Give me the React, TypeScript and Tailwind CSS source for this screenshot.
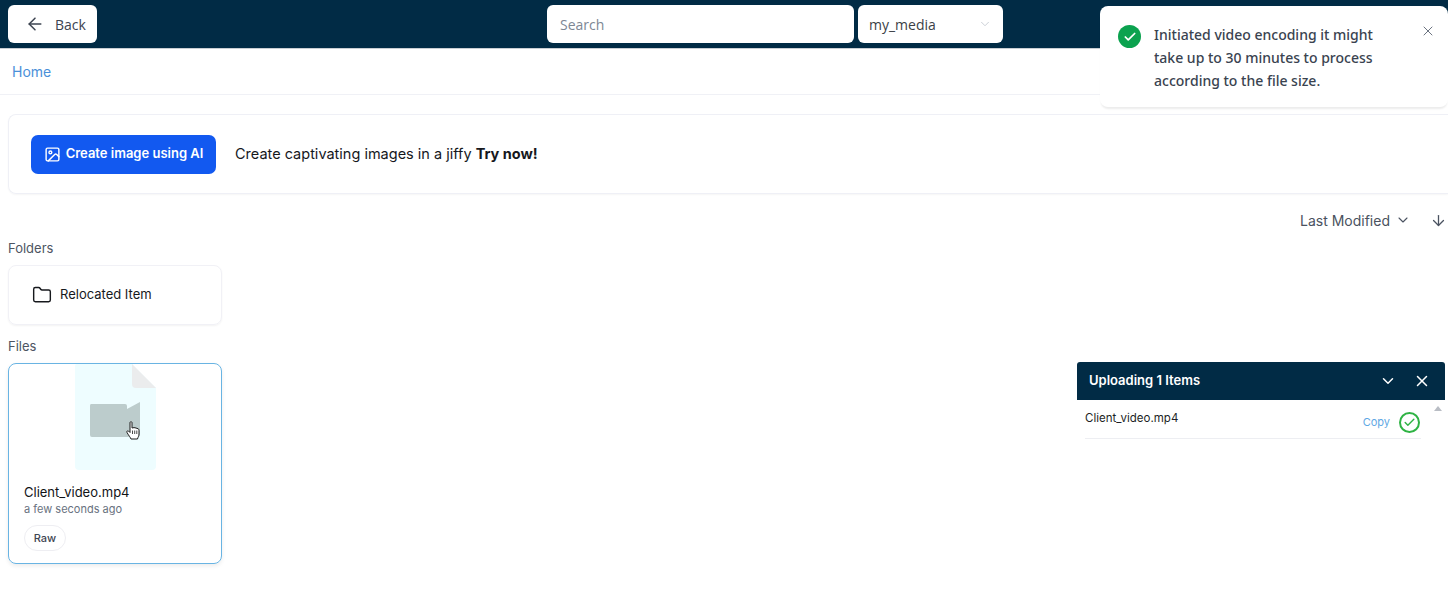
// 미디어 라이브러리 화면 — 헤더, 배너, 폴더/파일 카드, 토스트, 업로드 패널.
import { ArrowDown, ArrowLeft, Check, ChevronDown, Folder, Image, X } from 'lucide-react'

const INTER = { fontFamily: 'Inter, sans-serif' }

function Header() {
  return (
    <header className="relative flex h-[48px] items-start bg-[#012b45] pt-[5px] pl-[8px] shadow-[0_1px_0_#c9ced3]">
      <button className="flex h-[38px] w-[89px] items-center rounded-[6px] bg-white pl-[17px] text-[14px] text-[#3d4451] font-['Open_Sans',sans-serif]">
        <ArrowLeft className="h-[20px] w-[20px] mr-[10px]" strokeWidth={1.8} />
        Back
      </button>
      <div className="ml-[450px] flex h-[38px] w-[307px] items-center rounded-[6px] bg-white pl-[13px] text-[14px] text-[#7d8794] font-['Open_Sans',sans-serif]">
        Search
      </div>
      <div className="ml-[4px] flex h-[38px] w-[145px] items-center justify-between rounded-[6px] bg-white pl-[11px] pr-[11px] text-[14px] text-[#3b3f46] font-['Open_Sans',sans-serif]">
        my_media
        <ChevronDown className="h-[14px] w-[14px] text-[#c4c9d0]" strokeWidth={1.5} />
      </div>
    </header>
  )
}

function Banner() {
  return (
    <div className="ml-[8px] mt-[19px] flex h-[80px] items-center rounded-l-[8px] border border-r-0 border-[#eff0f6] pl-[22px] shadow-[0_1px_2px_rgba(0,0,0,0.04)]">
      <button className="flex h-[39px] w-[185px] items-center justify-center gap-[5px] rounded-[7px] bg-[#1259f0] text-[13px] font-semibold text-white">
        <Image className="h-[17px] w-[17px]" strokeWidth={2} />
        Create image using AI
      </button>
      <p className="ml-[19px] text-[14.5px] text-[#16181d]">
        Create captivating images in a jiffy <span className="font-bold">Try now!</span>
      </p>
    </div>
  )
}

function FolderCard() {
  return (
    <div className="ml-[8px] mt-[9px] flex h-[60px] w-[214px] items-center rounded-[8px] border border-[#f1f1f6] pl-[23px] shadow-[0_1px_2px_rgba(0,0,0,0.05)]">
      <Folder className="h-[20px] w-[20px] text-[#17191d]" strokeWidth={1.7} />
      <span className="ml-[8px] text-[13px] text-[#17191d]">Relocated Item</span>
    </div>
  )
}

function FileGlyph() {
  return (
    <svg width="81" height="106" viewBox="0 0 81 106" className="block">
      <path d="M2 0H57L81 24V102Q81 106 77 106H4Q0 106 0 102V2Q0 0 2 0Z" fill="#eefdff" />
      <path d="M57 0L81 24L61 24Q57 24 57 20Z" fill="#ebeced" />
      <path d="M16 40Q15 40 15 42V71Q15 73 17 73H63Q65 73 65 71V38L52 45V42Q52 40 50 40Z" fill="#bccccc" />
    </svg>
  )
}

function FileCard() {
  return (
    <div className="relative ml-[8px] mt-[9px] h-[201px] w-[214px] rounded-[8px] border border-[#69b4e3] shadow-[0_2px_4px_rgba(0,0,0,0.08)]">
      <div className="flex justify-center pl-[1px]">
        <FileGlyph />
      </div>
      {/* 마우스 커서 */}
      <svg width="14" height="19" viewBox="0 0 14 19" className="absolute left-[117px] top-[57px]">
        <path d="M4 1.5C4 .5 6 .5 6 1.5V7L8 6.6 10 7 12.2 7.8C13 8.2 13 9 13 10V13C13 15 12 16 11.5 18H5C4.5 16.5 3 15 1 11.5C.5 10 1.5 9.5 2.5 10L4 11.5Z" fill="#fff" stroke="#1c1c1c" strokeWidth="1" />
        <path d="M6.5 9.5V13M8.7 9.5V13M10.8 9.5V13" stroke="#1c1c1c" strokeWidth=".8" />
      </svg>
      <div className="pl-[15px] pt-[13px]">
        <div className="text-[13px] leading-[18px] text-[#111317]">Client_video.mp4</div>
        <div className="text-[11px] leading-[16px] text-[#697280]">a few seconds ago</div>
        <div className="mt-[8px] flex h-[26px] w-[42px] items-center justify-center rounded-full border border-[#eeeef2] text-[11px] font-medium text-[#3f4653]">
          Raw
        </div>
      </div>
    </div>
  )
}

function Toast() {
  return (
    <div className="absolute right-0 top-[6px] h-[101px] w-[348px] rounded-[8px] bg-white shadow-[0_3px_2px_-1px_rgba(0,0,0,0.08)] font-['Noto_Sans',sans-serif]">
      <div className="absolute left-[18px] top-[19px] flex h-[23px] w-[23px] items-center justify-center rounded-full bg-[#0ba24f]">
        <Check className="h-[14px] w-[14px] text-white" strokeWidth={3} />
      </div>
      <p className="absolute left-[54px] top-[17px] w-[250px] text-[14px] font-medium leading-[23px] text-[#3a4350]">
        Initiated video encoding it might take up to 30 minutes to process according to the file size.
      </p>
      <X className="absolute right-[12px] top-[17px] h-[16px] w-[16px] text-[#6b7380]" strokeWidth={1.5} />
    </div>
  )
}

function UploadPanel() {
  return (
    <div className="absolute left-[1077px] top-[362px] w-[368px]">
      <div className="flex h-[38px] items-center rounded-t-[3px] bg-[#012b45] pl-[12px] pr-[14px]">
        <span className="text-[13px] font-semibold text-white">Uploading 1 Items</span>
        <ChevronDown className="ml-auto h-[18px] w-[18px] text-white" strokeWidth={2} />
        <X className="ml-[16px] h-[18px] w-[18px] text-white" strokeWidth={2} />
      </div>
      <div className="relative ml-[8px] mr-[24px] flex h-[39px] items-center border-b border-[#edeef2]">
        <span className="mb-[1px] text-[11.5px] text-[#1c1f25]">Client_video.mp4</span>
        <span className="ml-auto mt-[6px] text-[11px] text-[#5fa8e4]">Copy</span>
        <span className="ml-[9px] mr-[1px] mt-[6px] flex h-[21px] w-[21px] items-center justify-center rounded-full border-2 border-[#2fb344]">
          <Check className="h-[13px] w-[13px] text-[#2fb344]" strokeWidth={2.6} />
        </span>
      </div>
      <div className="absolute right-[3px] top-[44px] h-0 w-0 border-x-[4px] border-b-[5px] border-x-transparent border-b-[#b9bdc4]" />
    </div>
  )
}

export default function App() {
  return (
    <div className="relative h-[610px] w-[1448px] overflow-hidden bg-white" style={INTER}>
      <Header />
      <nav className="flex h-[47px] items-center border-b border-[#f0f1f6] pl-[12px] text-[14px] text-[#4a90d9]">
        Home
      </nav>
      <Banner />
      <div className="mt-[16px] flex h-[20px] items-center justify-end pr-[1px] text-[14px] text-[#4a5260]">
        Last Modified
        <ChevronDown className="ml-[5px] h-[16px] w-[16px]" strokeWidth={1.6} />
        <ArrowDown className="ml-[19px] h-[17px] w-[17px]" strokeWidth={1.8} />
      </div>
      <div className="mt-[10px] h-[16px] pl-[8px] text-[13px] leading-[16px] text-[#4d5562]">Folders</div>
      <FolderCard />
      <div className="mt-[13px] h-[16px] pl-[8px] text-[13px] leading-[16px] text-[#4d5562]">Files</div>
      <FileCard />
      <Toast />
      <UploadPanel />
    </div>
  )
}
